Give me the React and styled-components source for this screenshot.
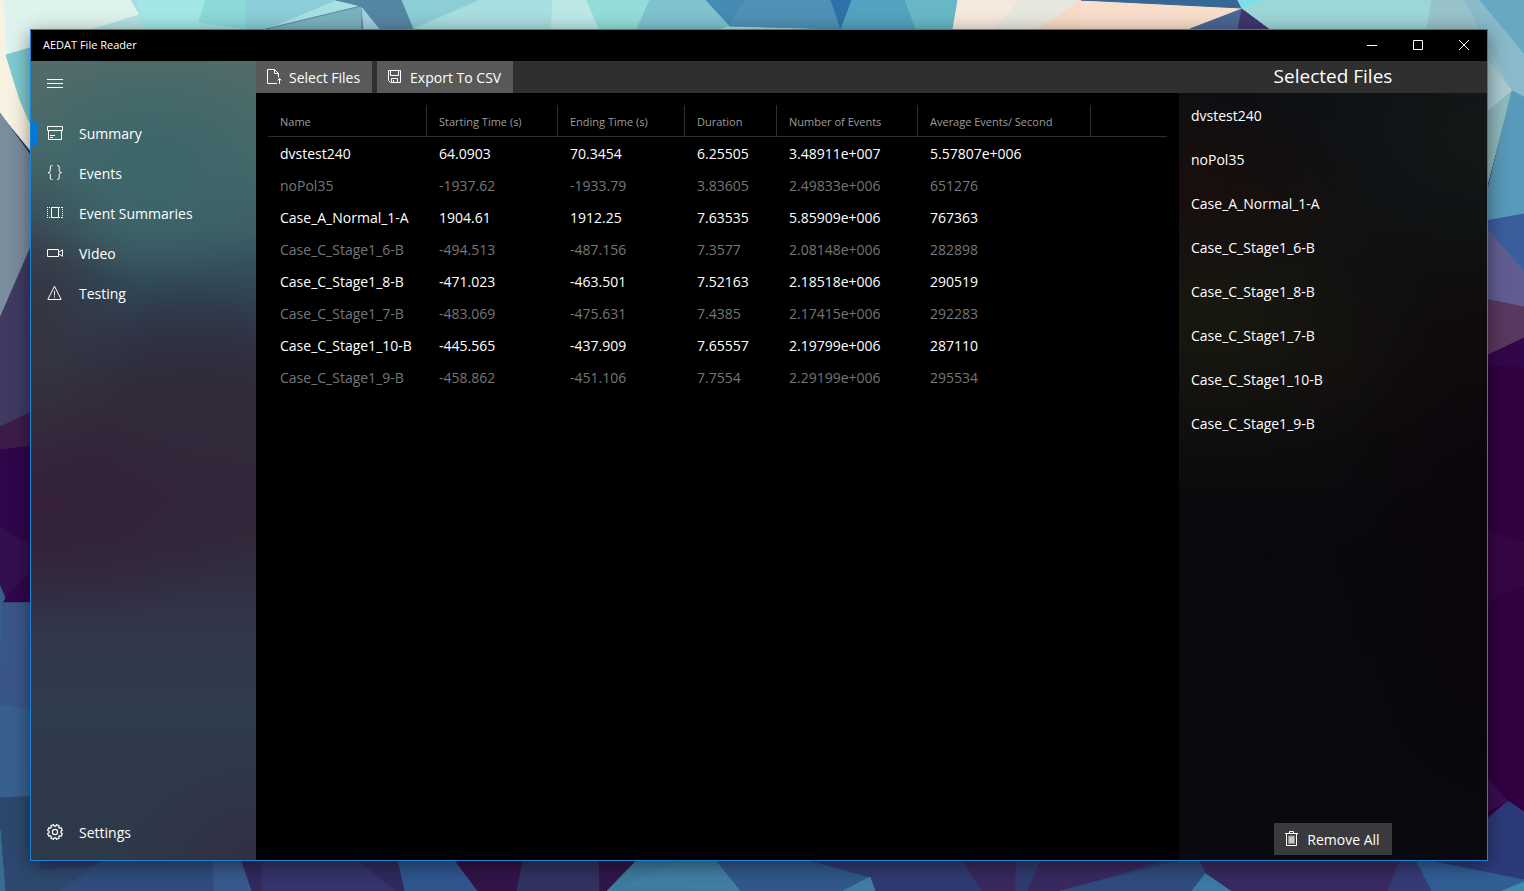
import React from "react";
import styled, { createGlobalStyle } from "styled-components";

const GlobalStyle = createGlobalStyle`
  *, *::before, *::after { box-sizing: border-box; }
  body {
    margin: 0;
    background: #2f3c6c;
    color: #fff;
    font-family: "Open Sans", "Noto Sans", sans-serif;
    font-size: 14px;
    line-height: 20px;
  }
  button { font: inherit; color: inherit; border: 0; margin: 0; cursor: default; }
`;

const Desktop = styled.div`
  position: relative;
  display: flex;
  min-height: 100vh;
  padding: 29px 36px 30px 30px;
`;

const WallpaperSvg = styled.svg`
  position: absolute;
  inset: 0;
  width: 100%;
  height: 100%;
`;

const AppWindow = styled.div`
  position: relative;
  flex: 1;
  min-width: 0;
  display: flex;
  flex-direction: column;
  border: 1px solid #1883d7;
  background: #000;
  box-shadow: 0 4px 18px rgba(0, 0, 0, 0.45);
`;

const TitleBar = styled.header`
  display: flex;
  justify-content: space-between;
  height: 31px;
  flex: none;
  background: #000;
`;

const AppTitle = styled.h1`
  margin: 0;
  padding-left: 12px;
  font-size: 11px;
  font-weight: 400;
  line-height: 30px;
`;

const CaptionButton = styled.button`
  width: 46px;
  height: 30px;
  padding: 0;
  background: transparent;
  svg { display: block; margin: 0 auto; }
`;

const Body = styled.div`
  display: flex;
  flex: 1;
  min-height: 0;
`;

const Sidebar = styled.nav`
  display: flex;
  flex-direction: column;
  width: 225px;
  flex: none;
  padding-bottom: 8px;
  background:
    radial-gradient(ellipse 150px 120px at 54% 13%, #3b666a 0%, rgba(59, 102, 106, 0) 100%),
    radial-gradient(ellipse 110px 170px at 0% 32%, #363441 0%, rgba(54, 52, 65, 0) 100%),
    radial-gradient(ellipse 130px 110px at 72% 41%, #302b3b 0%, rgba(48, 43, 59, 0) 100%),
    radial-gradient(ellipse 220px 130px at 8% 55%, #342039 0%, rgba(52, 32, 57, 0) 100%),
    radial-gradient(ellipse 130px 110px at 100% 100%, #322f43 0%, rgba(50, 47, 67, 0) 100%),
    linear-gradient(#526b69 0%, #48696a 12%, #3d5e64 21%, #304858 28%, #2e3a4b 34%, #302b3b 41%, #33273a 52%, #31293a 60%, #32354a 70%, #2f3b4e 80%, #2d3848 100%);
`;

const MenuButton = styled.button`
  display: flex;
  align-items: center;
  width: 48px;
  height: 44px;
  margin-bottom: 8px;
  padding: 0 0 0 16px;
  background: transparent;
`;

const NavButton = styled.button`
  position: relative;
  display: flex;
  align-items: center;
  gap: 16px;
  height: 40px;
  margin-top: ${(p) => (p.$last ? "auto" : "0")};
  padding: 0 16px;
  text-align: left;
  background: transparent;
  &::before {
    content: "";
    display: ${(p) => (p.$active ? "block" : "none")};
    position: absolute;
    left: 0;
    top: 8px;
    width: 6px;
    height: 24px;
    background: #0078d7;
  }
`;

const ButtonLabel = styled.span`
  padding-top: 2px;
`;

const Content = styled.div`
  display: flex;
  flex-direction: column;
  flex: 1;
  min-width: 0;
`;

const CommandBar = styled.div`
  display: flex;
  height: 32px;
  flex: none;
  background: #2f2f2f;
`;

const Commands = styled.div`
  display: flex;
  gap: 5px;
  flex: 1;
`;

const CommandButton = styled.button`
  display: flex;
  align-items: center;
  gap: 7px;
  height: 32px;
  padding: 0 12px 0 10px;
  white-space: nowrap;
  background: ${(p) => (p.$dim ? "#3a3a3d" : "#595959")};
`;

const PanelTitle = styled.h2`
  width: 308px;
  margin: 0;
  font-size: 19px;
  font-weight: 400;
  line-height: 30px;
  text-align: center;
`;

const Panels = styled.div`
  display: flex;
  flex: 1;
  min-height: 0;
`;

const Main = styled.main`
  flex: 1;
  min-width: 0;
  padding: 12px 12px 0;
`;

const Table = styled.table`
  width: 100%;
  table-layout: fixed;
  border-collapse: separate;
  border-spacing: 0;
`;

const Col = styled.col`
  width: ${(p) => p.$width};
`;

const HeaderCell = styled.th`
  height: 32px;
  padding: 2px 0 0 12px;
  border-right: ${(p) => (p.$plain ? "0" : "1px solid #2e2e2e")};
  border-bottom: 1px solid #2e2e2e;
  color: #9c9c9c;
  font-size: 11px;
  font-weight: 400;
  text-align: left;
  white-space: nowrap;
`;

const Row = styled.tr`
  color: ${(p) => (p.$muted ? "#767676" : "#fff")};
`;

const Cell = styled.td`
  height: 32px;
  padding: 2px 0 0 12px;
  white-space: nowrap;
`;

const FilesPanel = styled.aside`
  display: flex;
  flex-direction: column;
  align-items: center;
  width: 308px;
  flex: none;
  padding-bottom: 5px;
  background:
    radial-gradient(ellipse 190px 110px at 0% 12%, #190e0d 0%, rgba(25, 14, 13, 0) 100%),
    radial-gradient(ellipse 220px 170px at 10% 28%, #18180f 0%, rgba(24, 24, 15, 0) 100%),
    radial-gradient(ellipse 240px 160px at 100% 5%, #121818 0%, rgba(18, 24, 24, 0) 100%),
    radial-gradient(ellipse 160px 320px at 100% 62%, #0b040b 0%, rgba(11, 4, 11, 0) 100%),
    linear-gradient(#0c0f13 0%, #110d0e 35%, #08090d 60%, #080a0f 100%);
`;

const FileList = styled.ul`
  flex: 1;
  width: 100%;
  margin: 0;
  padding: 0;
  list-style: none;
`;

const FileItem = styled.li`
  padding: 13px 12px 11px;
`;

const Icon = ({ children, size = 16 }) => (
  <svg width={size} height={size} viewBox={`0 0 ${size} ${size}`} fill="none" stroke="#fff" strokeWidth="1" aria-hidden="true">
    {children}
  </svg>
);

const MenuIcon = () => (
  <Icon><path d="M0 4.500h16M0 8.500h16M0 12.500h16" /></Icon>
);
const SummaryIcon = () => (
  <Icon><path d="M.5 1.500h15v4H.5zM1.500 5.500v9h13v-9M3 10.500h5M3 12.500h3" /></Icon>
);
const BracesIcon = () => (
  <Icon>
    <path d="M5.500 .5h-.7q-1.500 0-1.500 1.500v3.500q0 1.800-2.300 2.100 2.300.3 2.300 2.100v3.300q0 1.500 1.500 1.500h.7" />
    <path d="M10 .5h.7q1.500 0 1.500 1.500v3.500q0 1.800 2.300 2.100-2.300.3-2.300 2.100v3.300q0 1.500-1.500 1.500H10" />
  </Icon>
);
const FilmIcon = () => (
  <Icon>
    <path d="M4.500 2.500h7v10h-7z" />
    <path d="M0 2.500h4M0 12.500h4M12 2.500h4M12 12.500h4" strokeDasharray="1 1" />
    <path d="M.5 2v11M15.500 2v11" strokeDasharray="1 1" />
  </Icon>
);
const VideoIcon = () => (
  <Icon><path d="M.5 4.500h11v7H.5zM11.500 7.300l4-2.500v6.500l-4-2.500" /></Icon>
);
const WarningIcon = () => (
  <Icon><path d="M7.500 1.200L.8 14.500h13.400zM7.500 6v4.500M7.500 11.500v1.200" /></Icon>
);

const gearPoints = () => {
  const pts = [];
  for (let i = 0; i < 8; i += 1) {
    [[-15, 6], [-11, 7.5], [11, 7.5], [15, 6]].forEach(([offset, radius]) => {
      const a = ((i * 45 + 22.5 + offset) * Math.PI) / 180;
      pts.push(`${(8 + radius * Math.cos(a)).toFixed(2)},${(8 + radius * Math.sin(a)).toFixed(2)}`);
    });
  }
  return pts.join(" ");
};
const GearIcon = () => (
  <Icon>
    <polygon points={gearPoints()} strokeWidth="1.2" />
    <circle cx="8" cy="8" r="2.600" strokeWidth="1.2" />
  </Icon>
);
const OpenFileIcon = () => (
  <Icon>
    <path d="M11 14.500H1.500v-14h7l4 4v4M8.500 .5v4h4" />
    <path d="M13.500 15V9.500M11.500 11.500l2-2 2 2" />
  </Icon>
);
const SaveIcon = () => (
  <Icon>
    <path d="M1.500 1.500h12v12h-10l-2-2zM3.500 1.500v5h8v-5M4.500 13.500v-4h6v4M6.500 11v2.500" />
  </Icon>
);
const TrashIcon = () => (
  <Icon>
    <path d="M1 2.500h13M5.500 2v-1.500h4V2M2.500 3v11.500h10V3" />
    <path d="M4.500 5h6v7.500h-6z" fill="#c4c4c6" stroke="#8c8c8e" />
  </Icon>
);

const SHAPES = [
  ["#a8dfe2", "0,0 1524,0 1524,120 0,120"],
  ["#dff3ee", "0,0 130,0 139,15 25,52 5,60"],
  ["#b3e2e4", "139,15 160,60 6,60 30,49"],
  ["#f8f2e2", "0,0 3,0 6,55 40,110 40,162 0,113"],
  ["#7ecbd0", "6,55 40,45 40,140 30,123 20,100"],
  ["#a2e7e6", "138,0 206,0 199,29 144,29 139,15"],
  ["#8bd8d8", "206,0 246,0 246,29 199,22"],
  ["#8ccdd7", "246,0 336,0 266,29 246,29"],
  ["#5686a6", "336,0 402,0 414,29 266,29 361,6"],
  ["#7ab1bf", "270,29 361,7 361,29"],
  ["#a3d0df", "362,8 379,29 364,29"],
  ["#8ccdd6", "402,0 508,0 420,29 414,29"],
  ["#a8dedf", "480,0 553,0 551,29 414,29"],
  ["#bbe8e7", "553,0 587,0 599,29 551,29"],
  ["#92ddd8", "587,0 650,0 637,29 599,29"],
  ["#7fc2d0", "650,0 706,0 729,25 720,29 637,29"],
  ["#458cb2", "706,0 745,0 729,25"],
  ["#4f91b5", "745,0 831,0 841,29 729,26"],
  ["#2d72a8", "831,0 852,0 841,29"],
  ["#52a3bf", "852,0 905,0 916,29 841,29"],
  ["#68b7c7", "905,0 958,0 953,29 916,29"],
  ["#f5e8dd", "958,0 1020,0 995,29 953,29"],
  ["#e8e7df", "1020,0 1081,0 1038,29 995,29"],
  ["#f7dac6", "1081,0 1079,29 1038,29"],
  ["#f9decb", "1081,0 1242,8 1190,29 1079,29"],
  ["#376795", "1081,0 1240,0 1242,8"],
  ["#4b6695", "1242,9 1238,29 1190,29"],
  ["#40366e", "1242,9 1269,29 1238,29"],
  ["#9dd6d8", "1238,0 1432,0 1427,40 1285,40 1242,8"],
  ["#7edfe6", "1238,0 1263,0 1242,8"],
  ["#98c2ca", "1432,0 1465,0 1512,91 1480,91 1427,29"],
  ["#8abbcb", "1465,0 1480,0 1524,52 1524,97 1512,91"],
  ["#67a8c2", "1480,0 1524,0 1524,53"],
  ["#a8cbd0", "1480,50 1512,91 1480,120"],
  ["#90b9bd", "1480,118 1512,91 1480,212"],
  ["#589ab9", "1512,91 1524,97 1524,214 1480,222 1488,189"],
  ["#3b5e9d", "1480,222 1524,214 1524,271 1480,221"],
  ["#625d91", "1480,221 1524,271 1524,307 1480,298"],
  ["#59385f", "1480,298 1524,307 1524,338 1480,359"],
  ["#31074a", "1480,359 1524,338 1524,368 1480,367"],
  ["#300040", "1480,367 1524,368 1524,820 1480,820"],
  ["#350643", "1480,529 1524,542 1524,585 1480,605"],
  ["#7a8d9c", "0,113 30,155 40,163 40,228 0,318"],
  ["#3e3a62", "40,226 40,408 0,427 0,318"],
  ["#3c1d4a", "0,427 40,408 40,445 0,450"],
  ["#2e064a", "0,450 40,445 40,603 0,603"],
  ["#33104d", "0,527 30,545 30,572 4,598 0,588"],
  ["#37608e", "0,586 5,598 2,603 40,603 40,798 0,798"],
  ["#3a5688", "2,603 40,603 40,710 0,704"],
  ["#2d486f", "0,798 40,796 40,870 213,860 213,891 0,891"],
  ["#3a6c91", "0,830 5,891 0,891"],
  ["#304d7e", "60,891 110,855 213,855 213,891"],
  ["#37598c", "213,855 240,855 252,891 214,891"],
  ["#302a5d", "240,855 397,855 405,891 252,891"],
  ["#35346b", "262,891 263,855 350,855 395,891"],
  ["#2f568f", "397,855 451,855 478,891 405,891"],
  ["#321449", "451,855 600,855 600,891 478,891"],
  ["#303260", "524,855 599,855 600,891 517,891"],
  ["#2e1749", "599,855 642,855 607,891 600,891"],
  ["#3d7b9f", "642,855 712,855 741,891 607,891"],
  ["#427ea2", "693,855 712,855 741,891 625,885"],
  ["#30588a", "712,855 790,855 870,877 843,891 741,891"],
  ["#2e3b70", "790,855 960,855 982,891 875,891 870,877"],
  ["#407da2", "843,891 870,877 875,891"],
  ["#38295e", "960,855 1043,855 1030,891 982,891"],
  ["#303b70", "1016,855 1043,855 1028,891 1016,891"],
  ["#382960", "1043,855 1180,855 1060,891 1028,891"],
  ["#304b7d", "1178,861 1198,861 1206,873 1192,891 1060,891"],
  ["#3b7ba5", "1192,891 1206,873 1232,891"],
  ["#382a61", "1198,855 1420,855 1432,891 1232,891 1206,873"],
  ["#353b75", "1388,891 1402,855 1420,855 1432,891"],
  ["#2d3a79", "1480,825 1508,801 1524,812 1524,880 1415,861 1480,861"],
  ["#3a0d50", "1480,770 1508,801 1480,815"],
  ["#305e95", "1415,858 1524,880 1524,882 1502,891 1432,891"],
  ["#3c8da9", "1502,891 1524,882 1524,891"],
];

const Wallpaper = () => (
  <WallpaperSvg viewBox="0 0 1524 891" preserveAspectRatio="none" aria-hidden="true">
    {SHAPES.map(([fill, points], i) => (
      <polygon key={i} fill={fill} stroke={fill} points={points} />
    ))}
  </WallpaperSvg>
);

const NAV = [
  ["Summary", SummaryIcon],
  ["Events", BracesIcon],
  ["Event Summaries", FilmIcon],
  ["Video", VideoIcon],
  ["Testing", WarningIcon],
];

const COLUMNS = [
  ["Name", "159px"],
  ["Starting Time (s)", "131px"],
  ["Ending Time (s)", "127px"],
  ["Duration", "92px"],
  ["Number of Events", "141px"],
  ["Average Events/ Second", "173px"],
];

const ROWS = [
  ["dvstest240", "64.0903", "70.3454", "6.25505", "3.48911e+007", "5.57807e+006"],
  ["noPol35", "-1937.62", "-1933.79", "3.83605", "2.49833e+006", "651276"],
  ["Case_A_Normal_1-A", "1904.61", "1912.25", "7.63535", "5.85909e+006", "767363"],
  ["Case_C_Stage1_6-B", "-494.513", "-487.156", "7.3577", "2.08148e+006", "282898"],
  ["Case_C_Stage1_8-B", "-471.023", "-463.501", "7.52163", "2.18518e+006", "290519"],
  ["Case_C_Stage1_7-B", "-483.069", "-475.631", "7.4385", "2.17415e+006", "292283"],
  ["Case_C_Stage1_10-B", "-445.565", "-437.909", "7.65557", "2.19799e+006", "287110"],
  ["Case_C_Stage1_9-B", "-458.862", "-451.106", "7.7554", "2.29199e+006", "295534"],
];

export default function App() {
  return (
    <Desktop>
      <GlobalStyle />
      <Wallpaper />
      <AppWindow>
        <TitleBar>
          <AppTitle>AEDAT File Reader</AppTitle>
          <div>
            <CaptionButton aria-label="Minimize"><Icon size={10}><path d="M0 5.500h10" /></Icon></CaptionButton>
            <CaptionButton aria-label="Maximize"><Icon size={10}><path d="M.5 .5h9v9h-9z" /></Icon></CaptionButton>
            <CaptionButton aria-label="Close"><Icon size={10}><path d="M0 0l10 10M10 0L0 10" /></Icon></CaptionButton>
          </div>
        </TitleBar>
        <Body>
          <Sidebar>
            <MenuButton aria-label="Menu"><MenuIcon /></MenuButton>
            {NAV.map(([label, Glyph], i) => (
              <NavButton key={label} $active={i === 0}><Glyph /><ButtonLabel>{label}</ButtonLabel></NavButton>
            ))}
            <NavButton $last><GearIcon /><ButtonLabel>Settings</ButtonLabel></NavButton>
          </Sidebar>
          <Content>
            <CommandBar>
              <Commands>
                <CommandButton><OpenFileIcon /><ButtonLabel>Select Files</ButtonLabel></CommandButton>
                <CommandButton><SaveIcon /><ButtonLabel>Export To CSV</ButtonLabel></CommandButton>
              </Commands>
              <PanelTitle>Selected Files</PanelTitle>
            </CommandBar>
            <Panels>
              <Main>
                <Table>
                  <colgroup>
                    {COLUMNS.map(([label, width]) => <Col key={label} $width={width} />)}
                    <Col $width="auto" />
                  </colgroup>
                  <thead>
                    <tr>
                      {COLUMNS.map(([label]) => <HeaderCell key={label} scope="col">{label}</HeaderCell>)}
                      <HeaderCell as="td" $plain />
                    </tr>
                  </thead>
                  <tbody>
                    {ROWS.map((row, i) => (
                      <Row key={row[0]} $muted={i % 2 === 1}>
                        {row.map((value, j) => <Cell key={j}>{value}</Cell>)}
                        <Cell />
                      </Row>
                    ))}
                  </tbody>
                </Table>
              </Main>
              <FilesPanel>
                <FileList>
                  {ROWS.map(([name]) => <FileItem key={name}>{name}</FileItem>)}
                </FileList>
                <CommandButton $dim><TrashIcon /><ButtonLabel>Remove All</ButtonLabel></CommandButton>
              </FilesPanel>
            </Panels>
          </Content>
        </Body>
      </AppWindow>
    </Desktop>
  );
}
